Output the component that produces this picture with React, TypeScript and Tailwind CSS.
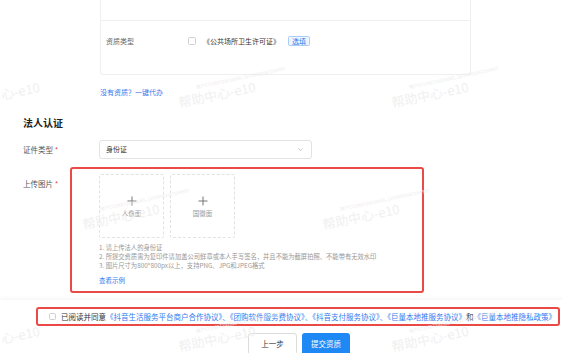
import React from "react";

const FONT = "font-['Noto_Sans_CJK_SC','Noto_Sans',sans-serif]";

function Mark({ text = "帮助中心-e10" }: { text?: string }) {
  return (
    <div className="w-[200px] flex flex-col items-start rotate-[-12deg] origin-left">
      <div className="ml-[20px] text-[4.5px] leading-[6px] text-[#ececec] whitespace-nowrap">
        用户571960728038865, 22709951067164907
      </div>
      <div className="mt-[2px] text-[13px] leading-[14px] text-[#f0f0f0] whitespace-nowrap">{text}</div>
    </div>
  );
}

function WatermarkLayer() {
  return (
    <div className="absolute inset-0 pointer-events-none select-none overflow-hidden flex flex-col pt-[88px] gap-[100px]">
      <div className="flex gap-[40px] pl-[2px]">
        <div className="w-[158px] flex justify-start">
          <div className="rotate-[-12deg] origin-left text-[13px] leading-[14px] text-[#f0f0f0] whitespace-nowrap">心-e10</div>
        </div>
        <Mark />
        <Mark />
      </div>
      <div className="flex gap-[40px] pl-[82px]">
        <Mark />
        <Mark />
      </div>
      <div className="flex gap-[40px] pl-[2px]">
        <div className="w-[158px] flex justify-start">
          <div className="rotate-[-12deg] origin-left text-[13px] leading-[14px] text-[#f0f0f0] whitespace-nowrap">心-e10</div>
        </div>
        <Mark />
        <Mark />
      </div>
    </div>
  );
}

export default function App() {
  return (
    <div className={`relative w-[563px] h-[353px] overflow-hidden bg-white ${FONT}`}>
      <div className="flex flex-col">
        {/* qualification card */}
        <div className="ml-[100px] w-[371px] h-[75px] border border-t-0 border-[#efefef] rounded-b-[3px]">
          <div className="h-[21px] border-b border-[#efefef]" />
          <div className="h-[40px] flex items-center">
            <div className="w-[87px] pl-[5px] text-[7px] text-[#666]">资质类型</div>
            <div className="w-[8px] h-[8px] border border-[#d0d0d0] rounded-[1.5px] bg-white" />
            <div className="ml-[7px] text-[7px] text-[#333]">《公共场所卫生许可证》</div>
            <div className="ml-[8px] h-[10px] px-[3px] flex items-center border border-[#a9cdf7] bg-[#eef5fe] rounded-[1.5px] text-[7px] leading-none text-[#2f7bf0]">
              选填
            </div>
          </div>
        </div>

        <div className="ml-[100px] mt-[11px] h-[12px] leading-[12px] text-[7px] text-[#2f7bf0]">
          没有资质？一键代办
        </div>

        <div className="ml-[23px] mt-[18px] h-[14px] leading-[14px] text-[10px] font-bold text-[#222]">
          法人认证
        </div>

        {/* id type */}
        <div className="mt-[10px] flex items-center h-[19px]">
          <div className="pl-[23px] w-[99px] text-[7.5px] text-[#555]">
            证件类型 <span className="text-[#e54545]">*</span>
          </div>
          <div className="w-[213px] h-[19px] border border-[#e3e3e3] rounded-[3px] flex items-center justify-between pl-[6px] pr-[8px]">
            <span className="text-[7px] text-[#333]">身份证</span>
            <svg width="5" height="3" viewBox="0 0 5 3" fill="none">
              <path d="M0.5 0.5 L2.5 2.5 L4.5 0.5" stroke="#aaa" strokeWidth="0.7" />
            </svg>
          </div>
        </div>

        {/* upload */}
        <div className="mt-[8px] flex">
          <div className="pl-[23px] w-[70px] pt-[11px] text-[7.5px] text-[#555]">
            上传图片 <span className="text-[#e54545]">*</span>
          </div>
          <div className="w-[354px] h-[126px] border-2 border-[#ea4a46] rounded-[3px] pl-[27px] pt-[5px]">
            <div className="flex gap-[6px]">
              {["人像面", "国徽面"].map((t) => (
                <div
                  key={t}
                  className="w-[65px] h-[64px] border border-dashed border-[#e2e2e2] rounded-[2px] flex flex-col items-center justify-center"
                >
                  <svg width="10" height="10" viewBox="0 0 10 10">
                    <path d="M5 0.5 V9.5 M0.5 5 H9.5" stroke="#666" strokeWidth="0.9" />
                  </svg>
                  <div className="mt-[3px] text-[6.5px] leading-[8px] text-[#999]">{t}</div>
                </div>
              ))}
            </div>
            <div className="mt-[5px] text-[6.3px] leading-[9px] text-[#999]">
              <div>1. 请上传法人的身份证</div>
              <div>2. 所提交资质需为复印件请加盖公司鲜章或本人手写签名，并且不能为截屏拍照、不能带有无效水印</div>
              <div>3. 图片尺寸为800*800px以上，支持PNG、JPG和JPEG格式</div>
            </div>
            <div className="mt-[6px] text-[6.5px] leading-[9px] text-[#2f7bf0]">查看示例</div>
          </div>
        </div>

        {/* footer */}
        <div className="mt-[7px] h-[60px] shadow-[0_-2px_5px_rgba(0,0,0,0.04)] pt-[7px] flex flex-col">
          <div className="ml-[36px] w-[524px] h-[19px] border-2 border-[#ea4a46] rounded-[3px] flex items-center pl-[11px]">
            <div className="w-[7px] h-[7px] border border-[#cfcfcf] rounded-[1.5px] bg-white" />
            <div className="ml-[5px] text-[7.5px] leading-none text-[#333] whitespace-nowrap">
              已阅读并同意
              <span className="text-[#2f7bf0]">《抖音生活服务平台商户合作协议》、《团购软件服务费协议》、《抖音支付服务协议》、《巨量本地推服务协议》</span>
              和
              <span className="text-[#2f7bf0]">《巨量本地推隐私政策》</span>
            </div>
          </div>
          <div className="mt-[7px] ml-[248px] flex gap-[5px]">
            <div className="w-[49px] h-[22px] border border-[#dcdcdc] rounded-[3px] bg-white flex items-center justify-center text-[7.5px] text-[#333]">
              上一步
            </div>
            <div className="w-[48px] h-[22px] rounded-[3px] bg-[#1e88f5] flex items-center justify-center text-[7.5px] text-white">
              提交资质
            </div>
          </div>
        </div>
      </div>

      <WatermarkLayer />
    </div>
  );
}
